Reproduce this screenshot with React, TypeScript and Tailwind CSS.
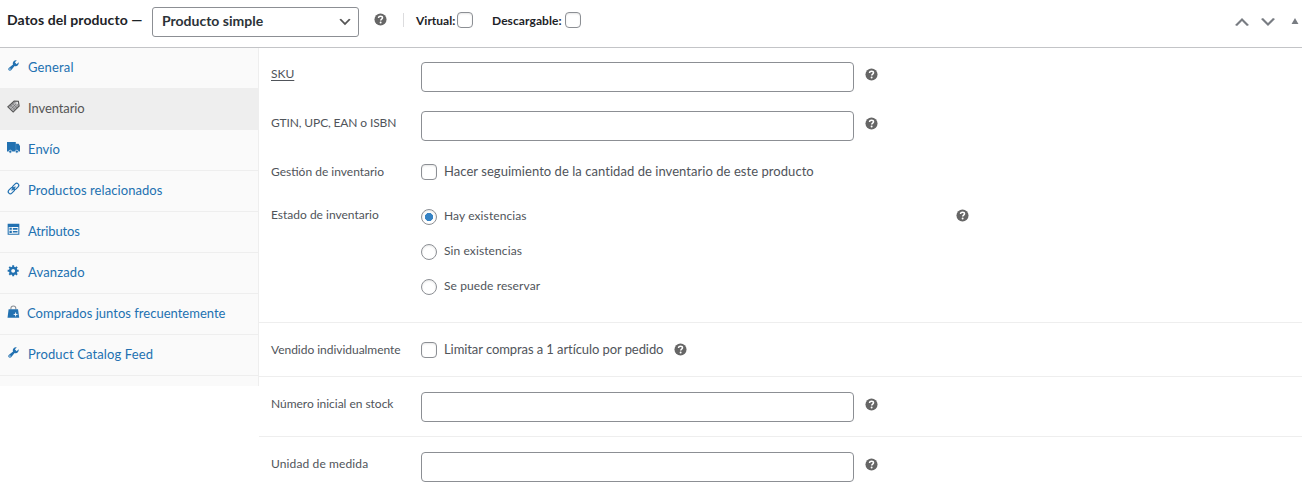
import type { ReactNode } from 'react';

type IconName = 'wrench' | 'tag' | 'truck' | 'link' | 'table' | 'gear' | 'bag';

interface Tab {
  label: string;
  icon: IconName;
  active?: boolean;
  track: string;
}

const TABS: Tab[] = [
  { label: 'General', icon: 'wrench', track: 'tracking-[0.15px]' },
  { label: 'Inventario', icon: 'tag', active: true, track: 'tracking-[-0.1px]' },
  { label: 'Envío', icon: 'truck', track: 'tracking-[0.05px]' },
  { label: 'Productos relacionados', icon: 'link', track: 'tracking-[0.08px]' },
  { label: 'Atributos', icon: 'table', track: 'tracking-[-0.15px]' },
  { label: 'Avanzado', icon: 'gear', track: 'tracking-[0.15px]' },
  { label: 'Comprados juntos frecuentemente', icon: 'bag', track: 'tracking-[0.01px] -ml-px' },
  { label: 'Product Catalog Feed', icon: 'wrench', track: 'tracking-[0.12px]' },
];

const STOCK_STATUSES = [
  { value: 'instock', label: 'Hay existencias' },
  { value: 'outofstock', label: 'Sin existencias' },
  { value: 'onbackorder', label: 'Se puede reservar' },
];

const ICONS: Record<IconName, ReactNode> = {
  wrench: (
    <path d="M16.68 9.77c-1.34 1.34-3.3 1.67-4.95.99l-5.41 6.52c-.99.99-2.59.99-3.58 0s-.99-2.59 0-3.57l6.52-5.42c-.68-1.65-.35-3.61.99-4.95 1.28-1.28 3.12-1.62 4.72-1.06l-2.89 2.89 2.82 2.82 2.86-2.87c.53 1.58.18 3.39-1.08 4.65zM3.81 16.21c.4.39 1.04.39 1.43 0 .4-.4.4-1.04 0-1.43-.39-.4-1.03-.4-1.43 0-.39.39-.39 1.03 0 1.43z" />
  ),
  tag: (
    <>
      <path d="M1.2 10.5 11 1.5l6.5.3 1.2 7.4L9.5 18.6z" fill="#b5b5b8" stroke="currentColor" strokeWidth="1.7" />
      <path
        d="M4 11l8-8M6.5 13.5l8.5-8.5M8.5 15.5l9-9M5 7.5l7.5 7.5M8 5l7.5 7.5"
        fill="none"
        stroke="currentColor"
        strokeWidth=".7"
      />
      <circle cx="15.6" cy="4.6" r="1.5" fill="#eee" />
    </>
  ),
  truck: (
    <>
      <path d="M0 1.5h13.5v2.7h4.3L20 7.5v8.5H0z" />
      <path d="M13.7 4.2v11" stroke="#fafafa" strokeWidth=".5" opacity=".5" />
      <circle cx="5" cy="16.4" r="2.3" stroke="#fafafa" strokeWidth="1" />
      <circle cx="15.2" cy="16.4" r="2.3" stroke="#fafafa" strokeWidth="1" />
    </>
  ),
  link: (
    <g fill="none" stroke="currentColor" strokeWidth="1.8">
      <rect x="-5.4" y="-3.2" width="10.8" height="6.4" rx="3.2" transform="translate(6.7 13.3) rotate(-45)" />
      <rect x="-5.4" y="-3.2" width="10.8" height="6.4" rx="3.2" transform="translate(13.3 6.7) rotate(-45)" />
      <path d="M7 13l6-6" />
    </g>
  ),
  table: (
    <path
      fillRule="evenodd"
      d="M1 1h18v17H1zM2.6 6v10.4h14.8V6zM3.8 7.3h3.6v3.2H3.8zM9 7.8h7.2v2.4H9zM3.8 12h3.6v3.2H3.8zM9 12.4h7.2v2.4H9z"
    />
  ),
  gear: (
    <path d="M18 12h-2.18c-.17.7-.44 1.35-.81 1.93l1.54 1.54-2.1 2.1-1.54-1.54c-.58.36-1.23.63-1.91.79V19H8v-2.18c-.68-.16-1.33-.43-1.91-.79l-1.54 1.54-2.12-2.12 1.54-1.54c-.36-.58-.63-1.23-.79-1.91H1V9.03h2.17c.16-.7.44-1.35.8-1.94L2.43 5.55l2.1-2.1 1.54 1.54c.58-.37 1.24-.64 1.93-.81V2h3v2.18c.68.16 1.33.43 1.91.79l1.54-1.54 2.12 2.12-1.54 1.54c.36.59.64 1.24.8 1.94H18V12zm-8.5 1.5c1.66 0 3-1.34 3-3s-1.34-3-3-3-3 1.34-3 3 1.34 3 3 3z" />
  ),
  bag: (
    <>
      <path d="M6 7V5.2a3.8 3.8 0 0 1 7.6 0V7" fill="none" stroke="#8a8f96" strokeWidth="1.6" />
      <path d="M2.5 6.5h14.5l1.8 13H.8z" />
      <path d="M13.2 11.5v6M10.2 14.5h6" stroke="#fff" strokeWidth="1.4" />
    </>
  ),
};

function TabIcon({ name }: { name: IconName }) {
  return (
    <svg viewBox="0 0 20 20" className="-mt-[5px] size-[13px] shrink-0" fill="currentColor">
      {ICONS[name]}
    </svg>
  );
}

function HelpTip({ className = '' }: { className?: string }) {
  return (
    <svg viewBox="0 0 20 20" className={`size-[13px] shrink-0 text-[#666] ${className}`} fill="currentColor">
      <circle cx="10" cy="10" r="9.3" />
      <path
        d="M6.8 7.7c.2-1.8 1.4-2.7 3.3-2.7 1.8 0 3 .9 3 2.4 0 2.1-2.8 2-2.8 4.3"
        fill="none"
        stroke="#fff"
        strokeWidth="2.3"
      />
      <circle cx="10.2" cy="14.6" r="1.5" fill="#fff" />
    </svg>
  );
}

function Checkbox() {
  return (
    <input
      type="checkbox"
      className="size-4 shrink-0 appearance-none rounded-[4px] border border-[#8c8f94] bg-white shadow-[inset_0_1px_2px_rgba(0,0,0,0.1)]"
    />
  );
}

function Label({ children, track = 'tracking-normal' }: { children: ReactNode; track?: string }) {
  return <span className={`w-[150px] shrink-0 whitespace-nowrap text-xs leading-6 ${track}`}>{children}</span>;
}

interface TextFieldProps {
  label: string;
  className?: string;
  track?: string;
  underline?: boolean;
}

function TextField({ label, className = '', track, underline = false }: TextFieldProps) {
  return (
    <div className={`flex h-[30px] pl-3 ${className}`}>
      <Label track={track}>
        <span className={underline ? 'underline underline-offset-2' : ''}>{label}</span>
      </Label>
      <input type="text" className="h-[30px] w-[433px] rounded-[4px] border border-[#8c8f94] bg-white px-2 text-sm" />
      <HelpTip className="mt-1.5 ml-[11px]" />
    </div>
  );
}

function Header() {
  return (
    <header className="flex h-12 items-center border-b border-[#c3c4c7] pb-[7px] pl-[7px] font-bold text-[#1d2327]">
      <span className="w-[145px] shrink-0 whitespace-nowrap text-sm tracking-[0.08px]">Datos del producto —</span>
      <button className="mt-[3px] flex h-[30px] w-[207px] items-center justify-between rounded-[3px] border border-[#8c8f94] pr-[5px] pb-0.5 pl-[9px] text-sm text-[#2c3338]">
        Producto simple
        <svg viewBox="0 0 20 20" className="mt-[3px] size-4" fill="#555">
          <path d="M5 6l5 5 5-5 2 1-7 7-7-7 2-1z" />
        </svg>
      </button>
      <HelpTip className="-mt-px ml-[15px]" />
      <span className="ml-4 h-[14px] w-px bg-[#dcdcde]" />
      <label className="ml-3 flex items-center gap-0.5 text-xs">
        <span className="w-[39px] whitespace-nowrap pt-0.5">Virtual:</span>
        <Checkbox />
      </label>
      <label className="ml-[19px] flex items-center gap-0.5 text-xs">
        <span className="w-[71px] whitespace-nowrap pt-0.5 tracking-[0.08px]">Descargable:</span>
        <Checkbox />
      </label>
      <div className="ml-auto flex items-center pt-[3px] text-[#787c82]">
        <svg viewBox="0 0 20 20" className="size-5" fill="currentColor">
          <path d="M15 14l-5-5-5 5-2-1 7-7 7 7z" />
        </svg>
        <svg viewBox="0 0 20 20" className="ml-1.5 size-5" fill="currentColor">
          <path d="M5 6l5 5 5-5 2 1-7 7-7-7z" />
        </svg>
        <svg viewBox="0 0 8 7" className="mr-[3px] -mt-0.5 ml-[13px] h-1.5 w-2" fill="currentColor">
          <path d="M4 0l4 7H0z" />
        </svg>
      </div>
    </header>
  );
}

export default function App() {
  return (
    <div className="h-[492px] w-[1302px] overflow-hidden bg-white font-['Lato',sans-serif] text-[#50545a]">
      <Header />
      <div className="flex items-start">
        <nav className="h-[338px] w-[259px] shrink-0 border-r border-[#eee] bg-[#fafafa]">
          {TABS.map((tab) => (
            <a
              key={tab.label}
              className={`flex h-[41px] items-center gap-2 border-b border-[#eee] pl-[7px] text-[13px] ${
                tab.active ? 'bg-[#eee] text-[#555]' : 'text-[#2271b1]'
              }`}
            >
              <TabIcon name={tab.icon} />
              <span className={`whitespace-nowrap ${tab.track}`}>{tab.label}</span>
            </a>
          ))}
        </nav>

        <main className="flex-1">
          <section className="h-[275px] border-b border-[#eee] pt-[14px]">
            <TextField label="SKU" underline />
            <TextField label="GTIN, UPC, EAN o ISBN" className="mt-[19px]" track="tracking-[-0.13px]" />
            <div className="mt-[19px] flex h-6 items-center pl-3">
              <Label>Gestión de inventario</Label>
              <Checkbox />
              <span className="ml-[7px] text-[13px] tracking-[0.05px]">
                Hacer seguimiento de la cantidad de inventario de este producto
              </span>
            </div>
            <div className="mt-[19px] flex items-start pl-3">
              <Label>Estado de inventario</Label>
              <div className="mt-px flex w-[535px] flex-col gap-[11px]">
                {STOCK_STATUSES.map((status) => (
                  <label key={status.value} className="flex h-6 items-center text-xs tracking-[0.1px]">
                    <input
                      type="radio"
                      name="stock_status"
                      defaultChecked={status.value === 'instock'}
                      className="mt-0.5 mr-[7px] size-4 appearance-none rounded-full border border-[#8c8f94] bg-white shadow-[inset_0_1px_2px_rgba(0,0,0,0.1)] checked:bg-[radial-gradient(circle,#3582c4_3.8px,white_4.4px)]"
                    />
                    {status.label}
                  </label>
                ))}
              </div>
              <HelpTip className="mt-1.5" />
            </div>
          </section>

          <section className="flex h-[54px] items-center border-b border-[#eee] pl-3">
            <Label track="tracking-[-0.03px]">Vendido individualmente</Label>
            <Checkbox />
            <span className="ml-[7px] w-[230px] whitespace-nowrap text-[13px] tracking-[-0.08px]">
              Limitar compras a 1 artículo por pedido
            </span>
            <HelpTip className="-mt-px" />
          </section>

          <section className="h-[60px] border-b border-[#eee] pt-[15px]">
            <TextField label="Número inicial en stock" track="tracking-[-0.03px]" />
          </section>
          <section className="pt-[15px]">
            <TextField label="Unidad de medida" track="tracking-[0.12px]" />
          </section>
        </main>
      </div>
    </div>
  );
}
